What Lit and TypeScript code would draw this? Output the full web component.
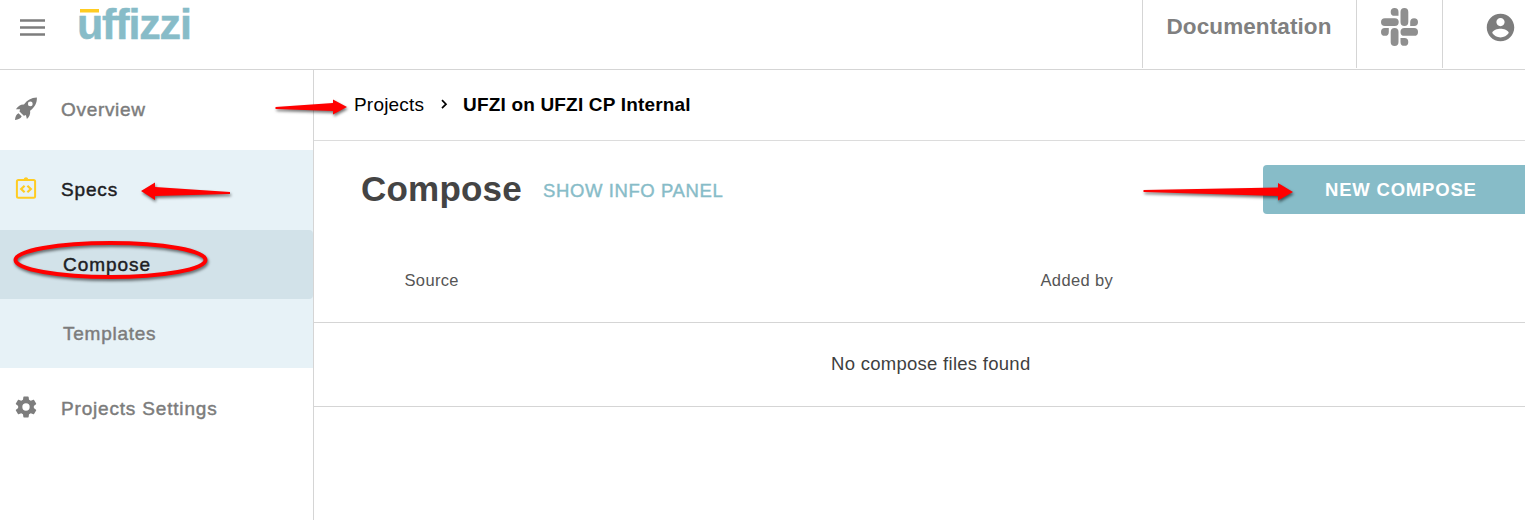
import { LitElement, html, svg, css } from "lit";
import { customElement, property } from "lit/decorators.js";

const icons = {
  rocket: svg`<path d="M22.900.6C17.100 .7 13.200 3.300 10 7.600C6.800 7.300 4.200 9 1.900 12.200L6.100 12.300C5.900 13.100 5.600 13.900 5.500 14.500L9.800 18.700C10.500 18.500 11.200 18.300 11.900 18L12.900 22C15.500 19.900 16.600 17 16.100 13.800C20.600 10.400 23.100 6.500 22.900.6ZM16.300 4.500A2.400 2.400 0 1 1 16.300 9.300A2.400 2.400 0 1 1 16.300 4.500ZM4.500 16.200C2.300 17.300 1.200 19.600 1 23C4.400 22.600 6.800 21.500 7.700 19.300Z" fill="#7d7d7d" fill-rule="evenodd"/>`,
  specs: svg`<rect x="2.900" y="3" width="18.200" height="17.800" rx="1.500" fill="none" stroke="#fc2" stroke-width="2"/><path d="M7.500 3.700V2.400H9.700C10 1 10.900.2 12 .2s2 .8 2.300 2.200h2.200v1.300Z" fill="#fc2"/><path d="M10.600 8.800 7.200 12l3.400 3.200M13.400 8.800 16.800 12l-3.400 3.200" fill="none" stroke="#fc2" stroke-width="2.200"/>`,
  gear: svg`<path fill="#7d7d7d" transform="translate(-.6 -.6) scale(1.050)" d="M12 15.500A3.500 3.500 0 0 1 8.500 12 3.500 3.500 0 0 1 12 8.500a3.500 3.500 0 0 1 3.500 3.500 3.500 3.500 0 0 1-3.500 3.500m7.430-2.530c.04-.32.07-.64.07-.97s-.03-.66-.07-1l2.110-1.630c.19-.15.24-.42.12-.64l-2-3.460c-.12-.22-.39-.31-.61-.22l-2.490 1c-.52-.39-1.060-.73-1.690-.98l-.37-2.650A.506.506 0 0 0 14 2h-4c-.25 0-.46.18-.5.42l-.37 2.650c-.63.25-1.170.59-1.690.98l-2.490-1c-.22-.09-.49 0-.61.22l-2 3.460c-.13.22-.07.49.12.64L4.570 11c-.04.34-.07.67-.07 1s.03.65.07.97l-2.110 1.660c-.19.15-.25.42-.12.64l2 3.460c.12.22.39.3.61.22l2.490-1.010c.52.4 1.060.74 1.690.99l.37 2.650c.04.24.25.42.5.42h4c.25 0 .46-.18.5-.42l.37-2.650c.63-.26 1.170-.59 1.690-.99l2.490 1.010c.22.08.49 0 .61-.22l2-3.460c.12-.22.07-.49-.12-.64z"/>`,
};

@customElement("nav-item")
class NavItem extends LitElement {
  @property() icon = "";
  @property() label = "";
  @property({ type: Boolean, reflect: true }) active = false;
  static styles = css`
    :host { display: flex; align-items: center; height: 80px; padding-left: 14px; box-sizing: border-box; color: #7c7c7c; }
    :host([active]) { background: #e7f2f7; color: #1d2023; }
    svg { width: 24px; height: 24px; margin: -3px 23px 0 0; display: block; }
    .label { font-size: 19px; line-height: 24px; letter-spacing: .68px; -webkit-text-stroke: .45px currentColor; white-space: pre; }
    .specs { letter-spacing: .85px; }
    .gear { letter-spacing: .82px; padding-top: 2px; }
  `;
  render() {
    return html`<svg viewBox="0 0 24 24">${icons[this.icon]}</svg><span class="label ${this.icon}">${this.label}</span>`;
  }
}

@customElement("app-root")
class AppRoot extends LitElement {
  static styles = css`
    :host { display: block; position: relative; width: 1525px; height: 520px; overflow: hidden; background: #fff; font-family: "Liberation Sans", Arial, sans-serif; }
    * { box-sizing: border-box; }
    svg { display: block; }
    header { display: flex; height: 70px; border-bottom: 1px solid #d5d5d5; }
    .menu { width: 25px; height: 18px; margin: 19px 0 0 20px; }
    .brand { margin: 0 0 0 34px; padding-top: 9px; width: 120px; background: linear-gradient(#fc2, #fc2) 1px 9px / 19px 3.500px no-repeat; }
    .word { display: block; margin-top: -9px; margin-left: -2px; height: 48px; line-height: 48px; font-size: 43px; font-weight: bold; letter-spacing: -1.150px; font-variant-ligatures: none; color: #87bcc8; -webkit-text-stroke: .5px #87bcc8; }
    .tools { display: flex; margin-left: auto; height: 68px; }
    .cell { border-left: 1px solid #d5d5d5; }
    .doc { width: 214px; padding: 14px 0 0 23.500px; font-size: 22.500px; line-height: 26px; font-weight: bold; letter-spacing: .1px; color: #808080; }
    .slack { width: 86px; padding: 8px 0 0 24px; }
    .user { width: 83px; padding: 11px 0 0 41px; }
    .body { display: flex; height: 450px; }
    nav { width: 314px; border-right: 1px solid #d5d5d5; }
    .sub { background: #e7f2f7; }
    .subitem { height: 69px; line-height: 69px; padding-left: 63px; font-size: 19px; letter-spacing: .95px; color: #7c7c7c; -webkit-text-stroke: .45px currentColor; }
    .templates { letter-spacing: .75px; }
    .current { background: #d2e2e9; color: #1d2023; border-radius: 0 4px 4px 0; }
    main { flex: 1; min-width: 0; }
    .crumbs { display: flex; align-items: center; height: 71px; padding: 0 0 1px 40px; border-bottom: 1px solid #dcdcdc; font-size: 19px; color: #000; }
    .first { letter-spacing: .2px; width: 86px; }
    .crumbs svg { margin: -1px 14px 0 0; }
    .here { font-weight: bold; letter-spacing: .18px; }
    .title { display: flex; align-items: center; height: 97px; padding-left: 47px; }
    h1 { margin: -2px 0 0; width: 182px; font-size: 35px; line-height: 40px; letter-spacing: .2px; color: #444; }
    .info { font-size: 18.500px; letter-spacing: .6px; color: #87bcc8; -webkit-text-stroke: .4px currentColor; padding-top: 3px; }
    .new { margin-left: auto; width: 262px; height: 49px; line-height: 49px; padding-left: 62px; background: #87bcc8; border-radius: 4px 0 0 4px; color: #fff; font-weight: bold; font-size: 18.500px; letter-spacing: .8px; }
    .heads { display: grid; grid-template-columns: 636px 1fr; height: 85px; line-height: 84px; padding-left: 90.500px; border-bottom: 1px solid #d5d5d5; font-size: 16.500px; letter-spacing: .35px; color: #555; }
    .empty { height: 84px; line-height: 81px; padding-left: 517px; border-bottom: 1px solid #d5d5d5; font-size: 18.500px; letter-spacing: .28px; color: #3f3f3f; }
    .marks { position: absolute; inset: 0; filter: drop-shadow(1px 2px 1.500px rgba(0, 0, 0, .55)); pointer-events: none; }
  `;

  render() {
    return html`
      <header>
        <svg class="menu" viewBox="0 0 25 18"><path d="M0 1.500H25M0 8.500H25M0 15.500H25" stroke="#7d7d7d" stroke-width="2.600"/></svg>
        <div class="brand"><span class="word">uffizzi</span></div>
        <div class="tools">
          <div class="cell doc">Documentation</div>
          <div class="cell slack">
            <svg width="37" height="38" viewBox="0 0 37 38" fill="#8f8f8f">
              <rect x="19.500" width="7.800" height="18" rx="3.900"/>
              <rect y="10.200" width="17.700" height="7.800" rx="3.900"/>
              <rect x="9.700" y="20" width="7.800" height="18" rx="3.900"/>
              <rect x="19.500" y="20" width="17.500" height="7.800" rx="3.900"/>
              <path d="M17.500 7.800H13.600A3.900 3.900 0 1 1 17.500 3.900ZM29.200 18V14.100A3.900 3.900 0 1 1 33.100 18ZM7.800 20V23.900A3.900 3.900 0 1 1 3.900 20ZM19.500 30H23.400A3.900 3.900 0 1 1 19.500 33.900Z"/>
            </svg>
          </div>
          <div class="cell user">
            <svg width="33" height="33" viewBox="0 0 24 24"><path fill="#7d7d7d" d="M12 2C6.480 2 2 6.480 2 12s4.480 10 10 10 10-4.480 10-10S17.520 2 12 2zm0 3c1.660 0 3 1.340 3 3s-1.340 3-3 3-3-1.340-3-3 1.340-3 3-3zm0 14.200c-2.500 0-4.710-1.280-6-3.220.03-1.990 4-3.080 6-3.080 1.990 0 5.970 1.090 6 3.080-1.290 1.940-3.500 3.220-6 3.220z"/></svg>
          </div>
        </div>
      </header>
      <div class="body">
        <nav>
          <nav-item icon="rocket" label="Overview"></nav-item>
          <nav-item icon="specs" label="Specs" active></nav-item>
          <div class="sub">
            <div class="subitem current">Compose</div>
            <div class="subitem templates">Templates</div>
          </div>
          <nav-item icon="gear" label="Projects Settings"></nav-item>
        </nav>
        <main>
          <div class="crumbs">
            <span class="first">Projects</span>
            <svg width="9" height="12" viewBox="0 0 9 12"><path d="M2 2.200 6 6.200 2 10.200" fill="none" stroke="#000" stroke-width="1.700"/></svg>
            <span class="here">UFZI on UFZI CP Internal</span>
          </div>
          <div class="title"><h1>Compose</h1><span class="info">SHOW INFO PANEL</span><div class="new">NEW COMPOSE</div></div>
          <div class="heads"><span>Source</span><span>Added by</span></div>
          <div class="empty">No compose files found</div>
        </main>
      </div>
      <svg class="marks" width="1525" height="520" viewBox="0 0 1525 520" fill="#f00">
        <path d="M275.500 107 333 103V99.500L347 107 333 114.500V111L275.500 109Z"/>
        <path d="M230 192 155 187V182.500L141 191 155 200V196L230 194Z"/>
        <path d="M1143.500 190 1278 187.500V183L1293 192 1278 200.500V196L1143.500 192Z"/>
        <ellipse cx="110.500" cy="260" rx="95" ry="17" fill="none" stroke="#f00" stroke-width="4"/>
      </svg>
    `;
  }
}
